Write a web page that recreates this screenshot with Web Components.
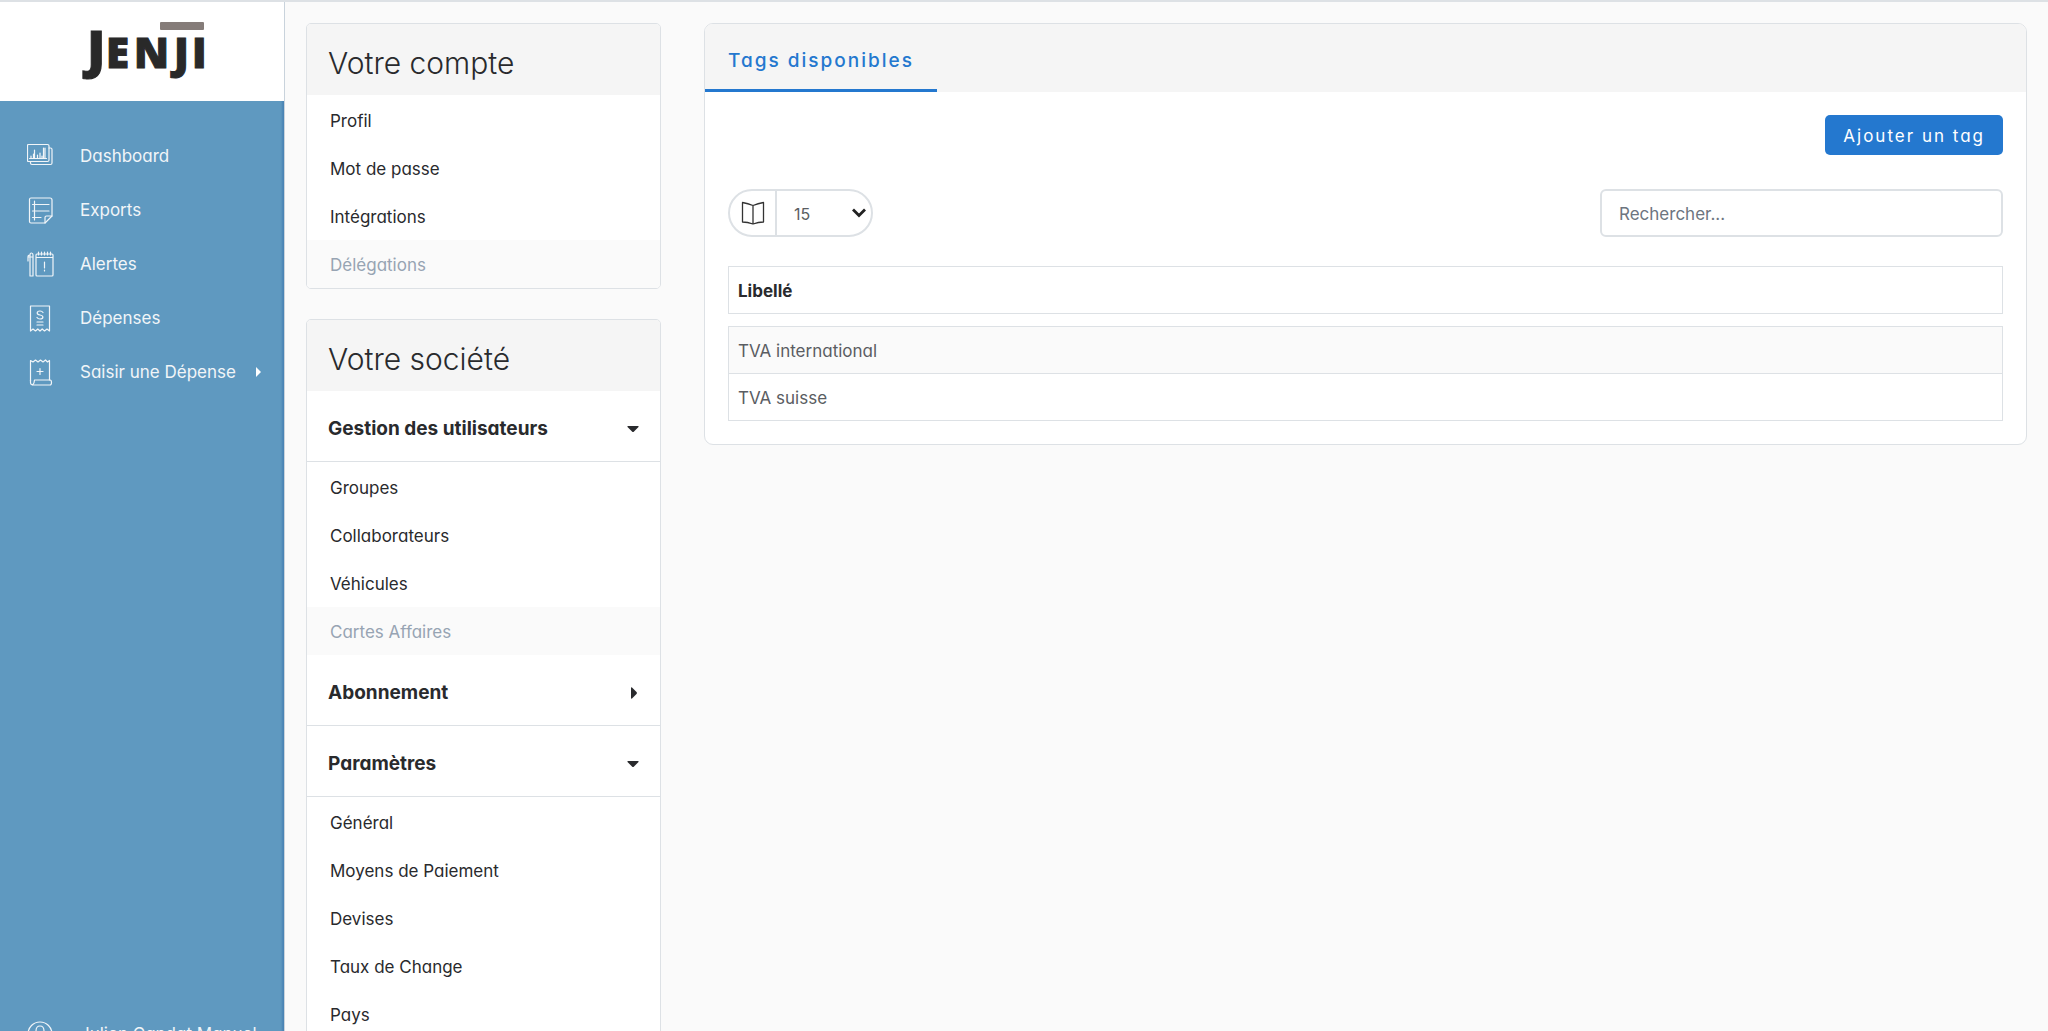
<!DOCTYPE html>
<html lang="fr">
<head>
<meta charset="utf-8">
<title>Jenji – Tags</title>
<style>
:root{--line:#dde1e5;--ink:#292a2d;--soft:#f5f5f5;--blue:#2478cf;--muted:#97a4b3;--body:#5a5d62}
*{box-sizing:border-box}
body{margin:0;background:#fafafa;color:var(--ink);font:400 17px/24px Inter,"Open Sans",sans-serif;font-feature-settings:"cv11","ss03"}
</style>
</head>
<body>
<jenji-app></jenji-app>
<script>
const define=(name,html)=>customElements.define(name,class extends HTMLElement{
  constructor(){super();
    this.attachShadow({mode:'open'}).innerHTML='<style>*,:host{box-sizing:border-box}a{color:inherit;text-decoration:none}</style>'+(typeof html==='function'?html(this):html);}
});

const stroke='fill="none" stroke="currentColor" stroke-width="1.2" stroke-linejoin="round" stroke-linecap="round"';
const icons={
  dashboard:'<path d="M1.500 1.500h19q1.500 0 1.500 1.500v14q0 1.500-1.500 1.500h-19q-1 0-1-1V2.500q0-1 1-1z"/><path d="M22 5h1.500q1.500 0 1.500 1.500V20q0 1.500-1.500 1.500H5q-1.500 0-1.500-1.500v-1.500"/><path d="M2.500 15.500h17M4 15v-2M6.500 15v-4M7.500 15V7M10.500 15v-3M13 15v-5M15 15v-2M16.500 15V5M18 15V5"/>',
  exports:'<path d="M4 1h19q2 0 2 2v16l-7 7H4q-1.500 0-1.500-1.500V2.500Q2.500 1 4 1z"/><path d="M25 19h-5.500q-1.500 0-1.500 1.500V26M7.500 4v19M5.500 7.500H22M5.500 14H22M5.500 20.500H14"/>',
  alertes:'<path d="M10 3h15q1 0 1 1v20q0 1-1 1H10q-1 0-1-1V4q0-1 1-1zM9 6.500h17M11.500 1v3M14.500 1v3M17.500 1v3M20.500 1v3M23.500 1v3M17.500 11v6M17.500 19v1"/><path d="M3 25V4q0-2 1.500-2T6 4v21zM3 6H1v4M3 6h3M1 6q0-2 2-2"/>',
  depenses:'<path d="M3.500 1h19v25l-2.500-2-2.500 2-2.300-2-2.200 2-2.200-2-2.300 2L6 24l-2.500 2z"/><path d="M16 7.500q-1-1.500-3-1.500-2.800 0-2.800 2 0 1.500 2.800 2t2.900 2q0 2-2.900 2-2 0-3-1.500M10 17h6M10 20h6"/>',
  saisir:'<path d="M3.500 22V1.500l2.500 1.500 2.500-2 2.500 2L13.500 1l2.500 2L18.500 1l2 2 2-1.500V21"/><path d="M7.500 21H23q1.500 0 1.500 2.500T23 26H6q-2.500 0-2.500-2.500V21M7.500 21q0 3-2 5M13 9.500v6M10 12.500h6"/>',
  user:'<circle cx="13" cy="13" r="12"/><path d="M13 5q4 0 4 5t-4 5-4-5 4-5zM5 22q1-4 6-5M21 22q-1-4-6-5"/>'
};
const icon=n=>`<svg width="27" height="27" viewBox="0 0 27 27" aria-hidden="true" ${stroke}>${icons[n]}</svg>`;

define('jenji-logo',`<style>:host{display:flex;justify-content:center;background:#fff;height:99px}
svg{display:block;font:800 42px "Open Sans",sans-serif;fill:#292929}</style>
<svg width="180" height="98" viewBox="52 2 180 98" role="img" aria-label="Jenji">
<rect x="160" y="22" width="44" height="8" rx="1" fill="#857c79"/>
<text y="68" stroke="#292929" stroke-width="1"><tspan x="87" font-size="52">J</tspan><tspan x="106">E</tspan><tspan x="134">N</tspan><tspan x="174">J</tspan><tspan x="192">I</tspan></text></svg>`);

define('nav-item',el=>`<style>:host{display:block}
a{display:flex;align-items:center;height:54px;padding:0 22px 0 27px;color:#f1f5f8}
svg{flex:none}.label{flex:1;margin-left:26px;white-space:nowrap}</style>
<a href="#">${icon(el.getAttribute('icon'))}<span class="label"><slot></slot></span>${el.hasAttribute('more')?'<svg width="8" height="12" viewBox="0 0 8 12" fill="#fff"><path d="M2 1l5 5-5 5z"/></svg>':''}</a>`);

define('side-bar',`<style>:host{display:flex;flex-direction:column;flex:none;width:285px;height:100%;background:#5f99c0;border-right:1px solid #c9d3dc;box-shadow:inset -3px 0 2px -1px #4a84b5}
nav{flex:1;padding-top:28px}.user{height:24px}</style>
<jenji-logo></jenji-logo>
<nav><nav-item icon="dashboard">Dashboard</nav-item><nav-item icon="exports">Exports</nav-item><nav-item icon="alertes">Alertes</nav-item><nav-item icon="depenses">Dépenses</nav-item><nav-item icon="saisir" more>Saisir une Dépense</nav-item></nav>
<div class="user"><nav-item icon="user">Julien Candat Manuel</nav-item></div>`);

define('menu-card',el=>`<style>:host{display:block;background:#fff;border:1px solid var(--line);border-radius:5px;overflow:hidden}
h2{margin:0;padding:21px 21px 14px;background:var(--soft);font-size:30px;line-height:36px;font-weight:300}</style>
<h2>${el.getAttribute('heading')}</h2><slot></slot>`);

define('menu-section',el=>`<style>:host{display:block}
button{display:flex;justify-content:space-between;align-items:center;width:100%;height:71px;padding:6px 20px 0 21px;border:0;border-bottom:1px solid var(--line);background:none;color:inherit;font:700 19px/24px Inter,sans-serif;font-feature-settings:inherit}</style>
<button type="button" aria-expanded="${el.hasAttribute('open')}">${el.getAttribute('heading')}<svg width="14" height="14" viewBox="0 0 14 14" fill="currentColor"><path d="${el.hasAttribute('open')?'M2 4h10q1 0 .5 1L8 9.500q-1 1-2 0L1.500 5Q1 4 2 4z':'M5 2q0-1 1-.5L10.500 6q1 1 0 2L6 12.500q-1 .5-1-.5z'}"/></svg></button><slot></slot>`);

define('menu-list',`<style>:host{display:block;padding-top:1px}</style><slot></slot>`);
define('menu-link',`<style>:host{display:block}a{display:block;padding:13px 23px 11px}
:host([muted]){background:#fafafa;color:var(--muted)}</style><a href="#"><slot></slot></a>`);

define('tab-card',el=>`<style>:host{display:block;background:#fff;border:1px solid var(--line);border-radius:9px;overflow:hidden}
header{display:flex;background:var(--soft)}
a{padding:25px 23px 16px;border-bottom:3px solid var(--blue);color:var(--blue);font-size:19px;font-weight:500;letter-spacing:2px}
.body{padding:23px}</style>
<header><a href="#">${el.getAttribute('heading')}</a></header><div class="body"><slot></slot></div>`);

define('primary-button',`<style>:host{display:block}
button{height:40px;padding:2px 18px 0;border:0;border-radius:5px;background:var(--blue);color:#fff;font:400 17px/24px Inter,sans-serif;font-feature-settings:inherit;letter-spacing:2px}</style>
<button type="button"><slot></slot></button>`);

define('page-size',`<style>:host{display:inline-grid;grid-template-columns:47px 94px;align-items:center;height:48px;border:2px solid var(--line);border-radius:24px;background:#fff;overflow:hidden}
label{display:grid;place-items:center;height:44px;border-right:2px solid var(--line)}
.pick{display:grid;align-items:center}.pick>*{grid-area:1/1}
select{appearance:none;width:100%;height:44px;padding:2px 17px 0;border:0;background:none;color:var(--body);font:400 16px/24px Inter,sans-serif}
.chev{justify-self:end;margin-right:4px;pointer-events:none}</style>
<label for="n" aria-label="Lignes par page"><svg width="24" height="24" viewBox="0 0 24 24" fill="none" stroke="#333" stroke-width="1.300" stroke-linejoin="round"><path d="M12 4.500Q7 2.500 1.500 1.500v19.500q5 .2 10.500 2 5.500-1.800 10.500-2V1.500Q17 2.500 12 4.500zM12 4.500V23"/></svg></label>
<span class="pick"><select id="n"><option>15</option><option>30</option><option>50</option></select><svg class="chev" width="16" height="12" viewBox="0 0 16 12" fill="none" stroke="#222" stroke-width="2.800"><path d="M2 2.500l6 6 6-6"/></svg></span>`);

define('search-box',`<style>:host{display:block}
input{display:block;width:403px;height:48px;padding:2px 17px 0;border:2px solid var(--line);border-radius:6px;background:#fff;color:var(--ink);font:400 17px/24px Inter,sans-serif;font-feature-settings:inherit}
input::placeholder{color:#6d7580;opacity:1}</style><input type="search" aria-label="Rechercher" placeholder="Rechercher...">`);

define('tag-table',`<style>:host{display:block}
table{width:100%;border-collapse:separate;border-spacing:0}
th,td{height:48px;padding:2px 9px 0;border:1px solid var(--line);text-align:left}
th{font-weight:700}td{color:var(--body)}
tbody::before{content:"";display:block;height:12px}
tbody tr:nth-child(odd){background:#fafafa}tbody tr+tr td{height:47px;border-top:0}</style>
<table><thead><tr><th scope="col">Libellé</th></tr></thead><tbody><tr><td>TVA international</td></tr><tr><td>TVA suisse</td></tr></tbody></table>`);

define('jenji-app',`<style>:host{display:flex;height:100vh;border-top:2px solid var(--line);overflow:hidden}
main{flex:1;display:flex;align-items:flex-start;gap:43px;padding:21px 21px 0;min-width:0}
aside{flex:none;width:355px;display:grid;gap:30px}
tab-card{flex:1}
.action{display:flex;justify-content:flex-end}
.tools{display:flex;justify-content:space-between;margin:34px 0 29px}</style>
<side-bar></side-bar>
<main><aside>
<menu-card heading="Votre compte"><menu-list><menu-link>Profil</menu-link><menu-link>Mot de passe</menu-link><menu-link>Intégrations</menu-link><menu-link muted>Délégations</menu-link></menu-list></menu-card>
<menu-card heading="Votre société">
<menu-section heading="Gestion des utilisateurs" open><menu-list><menu-link>Groupes</menu-link><menu-link>Collaborateurs</menu-link><menu-link>Véhicules</menu-link><menu-link muted>Cartes Affaires</menu-link></menu-list></menu-section>
<menu-section heading="Abonnement"></menu-section>
<menu-section heading="Paramètres" open><menu-list><menu-link>Général</menu-link><menu-link>Moyens de Paiement</menu-link><menu-link>Devises</menu-link><menu-link>Taux de Change</menu-link><menu-link>Pays</menu-link></menu-list></menu-section>
</menu-card></aside>
<tab-card heading="Tags disponibles"><div class="action"><primary-button>Ajouter un tag</primary-button></div>
<div class="tools"><page-size></page-size><search-box></search-box></div><tag-table></tag-table></tab-card>
</main>`);
</script>
</body>
</html>
